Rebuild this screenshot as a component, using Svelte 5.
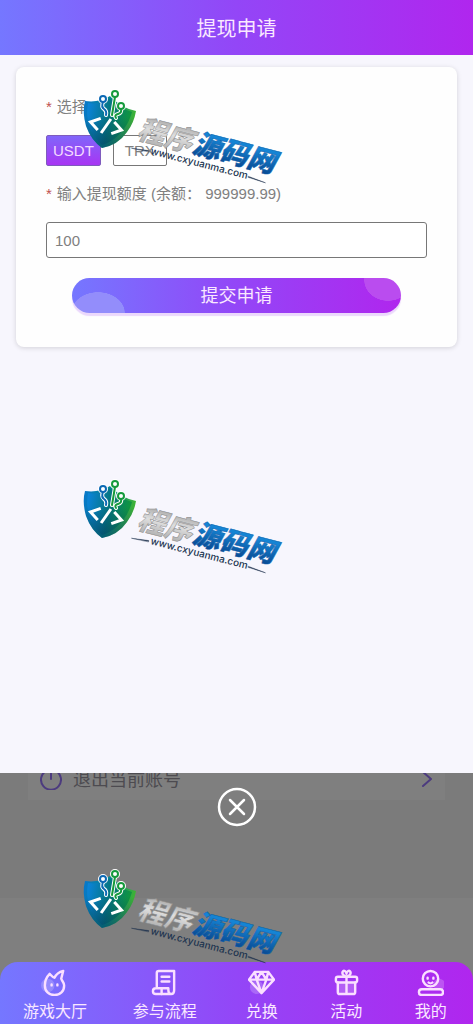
<script lang="ts">
const tokens = ["USDT", "TRX"];
const watermarks = ["top", "middle", "bottom"];
const tabs = [
  { icon: "hall", label: "游戏大厅" },
  { icon: "flow", label: "参与流程" },
  { icon: "swap", label: "兑换" },
  { icon: "gift", label: "活动" },
  { icon: "mine", label: "我的" },
];

let token = $state("USDT");
let amount = $state("100");
</script>

{#snippet tabIcon(name: string)}
  <svg class="tab-icon" viewBox="0 0 28 28" aria-hidden="true">
    {#if name === "hall"}
      <circle class="glow" cx="7" cy="17" r="7" />
      <path d="M9 5C5 9 4 13 4 17c0 6 4 10 10 10s10-4 10-10c0-3-2-4-3-7l2-8c-4 1-7 3-9 7-2 0-3-2-5-4z" />
      <path d="M11 16v1M17 16v1" />
    {:else if name === "flow"}
      <path d="M6 19V4c0-1 1-2 2-2h16v20c0 3-1 4-3 4s-3-2-3-4v-2H5c-2 0-3 1-3 3s1 3 3 3h16" />
      <path d="M11 8h8M11 13h8M11 20v6" />
    {:else if name === "swap"}
      <circle class="glow" cx="9" cy="19" r="7" />
      <path d="M7 3h14l6 8-13 14L1 11zM1 11h26M9 11l5 14 5-14M7 3l2 8 5-8 5 8 2-8" />
    {:else if name === "gift"}
      <rect class="glow" x="4" y="13" width="20" height="13" rx="3" />
      <rect x="3" y="8" width="22" height="6" rx="2" />
      <path d="M5 14v10c0 1 1 2 2 2h14c1 0 2-1 2-2V14M14 8v18M14 8c-3-1-5-3-4-5s4-1 4 2c0-3 3-4 4-2s-1 4-4 5" />
    {:else}
      <circle class="glow" cx="23" cy="16" r="6" />
      <circle cx="14" cy="10" r="8" />
      <path d="M11 9v1M17 9v1M12 14c1 1 3 1 4 0" />
      <rect x="2" y="21" width="25" height="6" rx="3" />
    {/if}
  </svg>
{/snippet}

{#snippet watermark(slot: string)}
  <svg class="watermark {slot}" viewBox="0 0 230 110" aria-hidden="true">
    <defs>
      <linearGradient id="edge-{slot}" x1="0" x2="1" y1="0.3" y2="0.5">
        <stop offset="0" stop-color="#0878c8" />
        <stop offset="0.5" stop-color="#078d86" />
        <stop offset="1" stop-color="#43b62c" />
      </linearGradient>
      <linearGradient id="core-{slot}" x1="0" x2="1" y1="0.3" y2="0.5">
        <stop offset="0" stop-color="#0b83d8" />
        <stop offset="0.5" stop-color="#05757c" />
        <stop offset="1" stop-color="#119a38" />
      </linearGradient>
      <linearGradient id="shade-{slot}" x1="0" x2="0" y1="0" y2="1">
        <stop offset="0.4" stop-color="#042b5c" stop-opacity="0" />
        <stop offset="1" stop-color="#042b5c" stop-opacity="0.5" />
      </linearGradient>
      <linearGradient id="silver-{slot}" x1="0" x2="0" y1="0" y2="1">
        <stop offset="0" stop-color="#8e8e8e" />
        <stop offset="0.5" stop-color="#dedede" />
        <stop offset="1" stop-color="#a2a2a2" />
      </linearGradient>
      <linearGradient id="blue-{slot}" x1="0" x2="0" y1="0" y2="1">
        <stop offset="0.3" stop-color="#1584d4" />
        <stop offset="1" stop-color="#073c83" />
      </linearGradient>
    </defs>
    <path d="M15 21Q29 23 40 16Q51 28 66 31Q64 43 57 52Q48 65 32 68Q21 60 16 46Q12 32 15 21z" fill="url(#edge-{slot})" />
    <path d="M18 23Q30 25 40 18Q49 28 62 32Q59 43 53 50Q45 61 32 65Q23 57 19 46Q16 34 18 23z" fill="url(#core-{slot})" />
    <path d="M15 21Q29 23 40 16Q51 28 66 31Q64 43 57 52Q48 65 32 68Q21 60 16 46Q12 32 15 21z" fill="url(#shade-{slot})" />
    <g class="circuit halo">
      <path d="M33 22q-2 5 1 7t2 6M45 17l-3 18M51 29q1 4-3 5t-2 4" />
      <circle cx="33" cy="19" r="3" /><circle cx="45" cy="14" r="3" /><circle cx="51" cy="26" r="3" />
    </g>
    <g class="circuit">
      <path class="blue" d="M33 22q-2 5 1 7t2 6" />
      <path class="green" d="M45 17l-3 18M51 29q1 4-3 5t-2 4" />
      <circle class="blue" cx="33" cy="19" r="3" />
      <circle class="green" cx="45" cy="14" r="3" />
      <circle class="green" cx="51" cy="26" r="3" />
    </g>
    <path class="code" transform="translate(36 46) rotate(14.500)" d="M-7-6l-9 6 9 6M3-8l-6 16M7-6l9 6-9 6" />
    <g transform="translate(66 58) rotate(14.500)">
      <text class="brand" fill="url(#silver-{slot})" stroke="#8b8b8b">程序</text>
      <text class="brand" x="57" fill="url(#blue-{slot})" stroke="#0d62ad">源码网</text>
    </g>
    <g transform="translate(80 74) rotate(14.500)">
      <text class="site">www.cxyuanma.com</text>
      <path class="rule" d="M-19-1l17-2 0 1zM101-3l18 2-18-1z" />
    </g>
  </svg>
{/snippet}

<div class="page">
  <header>
    <h1>提现申请</h1>
  </header>

  <main>
    <form class="card" onsubmit={(e) => e.preventDefault()}>
      <div class="label" id="token-label"><span class="required">*</span>选择</div>
      <div class="tokens" role="group" aria-labelledby="token-label">
        {#each tokens as name (name)}
          <button
            type="button"
            class="token"
            class:active={token === name}
            onclick={() => (token = name)}
          >
            {name}
          </button>
        {/each}
      </div>
      <label class="label" for="amount">
        <span class="required">*</span>输入提现额度 (余额： 999999.99)
      </label>
      <input id="amount" type="text" inputmode="decimal" bind:value={amount} />
      <button class="submit" type="submit">提交申请</button>
    </form>
  </main>

  <section class="backdrop">
    <a class="logout" href="#logout">
      <svg class="power" viewBox="0 0 22 22" aria-hidden="true">
        <path d="M6 3a10 10 0 1 0 10 0M11 1v10" />
      </svg>
      <span>退出当前账号</span>
      <svg class="chevron" viewBox="0 0 12 22" aria-hidden="true">
        <path d="M2 4l8 7-8 7" />
      </svg>
    </a>
    <button class="close" type="button" aria-label="关闭">
      <svg viewBox="0 0 40 40" aria-hidden="true">
        <circle cx="20" cy="20" r="18" />
        <path d="M13 13l14 14M27 13L13 27" />
      </svg>
    </button>
  </section>

  <div class="tab-wrap">
    <nav>
      {#each tabs as tab (tab.icon)}
        <a class="tab" href="#{tab.icon}">
          {@render tabIcon(tab.icon)}
          <span>{tab.label}</span>
        </a>
      {/each}
    </nav>
  </div>

  {#each watermarks as slot (slot)}
    {@render watermark(slot)}
  {/each}
</div>

<style>
:global(body) {
  margin: 0;
}

.page {
  --brand: linear-gradient(90deg, #7577ff, #9346f7 50%, #b026ee);
  position: relative;
  display: flex;
  flex-direction: column;
  min-height: 100vh;
  background: #f7f6fd;
  color: #808080;
  font-family: "Liberation Sans", "Noto Sans CJK SC", sans-serif;
  font-size: 15px;
}

button,
input {
  box-sizing: border-box;
  font: inherit;
}

a {
  text-decoration: none;
}

svg {
  display: block;
  fill: none;
  stroke-linecap: round;
  stroke-linejoin: round;
}

header {
  display: flex;
  align-items: center;
  justify-content: center;
  height: 55px;
  background: var(--brand);
}

h1 {
  margin: 0;
  color: #fae8ff;
  font-size: 20px;
  font-weight: 400;
}

main {
  flex: 1;
  padding: 12px 16px;
}

.card {
  display: flex;
  flex-direction: column;
  gap: 16px;
  padding: 28px 30px 34px;
  border-radius: 8px;
  background: #fefefe;
  box-shadow: 0 1px 5px rgba(0, 0, 0, 0.15);
}

.label {
  line-height: 24px;
}

.required {
  margin-right: 5px;
  color: #c0504d;
}

.tokens {
  display: flex;
  gap: 12px;
}

.token {
  min-width: 54px;
  height: 31px;
  padding: 0 6px;
  border: 1px solid #777;
  border-radius: 2px;
  background: #fff;
  color: #808080;
}

.token.active {
  border-color: #7e5bbd;
  background: linear-gradient(#8066fa, #a835f3);
  color: #f5dcff;
}

input {
  width: 100%;
  height: 36px;
  padding: 0 8px;
  border: 1px solid #777;
  border-radius: 3px;
  background: #fff;
  color: #808080;
}

.submit {
  height: 35px;
  margin: 4px 26px 0;
  padding: 0 0 3px;
  border: 0;
  border-radius: 18px;
  background:
    radial-gradient(ellipse 27px 21px at 26px 35px, #938dfb 98%, transparent),
    radial-gradient(ellipse 24px 21px at calc(100% - 13px) 2px, #ba4cef 98%, transparent),
    var(--brand);
  box-shadow: 0 3px 1px #ebd8fc;
  color: #fae8ff;
  font-size: 18px;
}

.backdrop {
  position: relative;
  height: 189px;
  background: linear-gradient(#7b7b7b 125px, #7f7f7f 125px);
}

.logout {
  display: flex;
  align-items: flex-end;
  height: 27px;
  margin: 0 28px;
  padding: 0 12px;
  overflow: hidden;
  background: #7f7f7f;
  color: #4d4b50;
  font-size: 18px;
  line-height: 40px;
}

.logout span {
  flex: 1;
  margin-left: 11px;
}

.power {
  width: 22px;
  height: 22px;
  margin-bottom: 10px;
  stroke: #4c3b7f;
  stroke-width: 2;
}

.chevron {
  width: 12px;
  height: 22px;
  margin-bottom: 10px;
  stroke: #4c3b7f;
  stroke-width: 2;
}

.close {
  position: absolute;
  top: 14px;
  left: 50%;
  padding: 0;
  border: 0;
  background: none;
  transform: translateX(-50%);
}

.close svg {
  width: 40px;
  height: 40px;
  stroke: #fff;
  stroke-width: 2.500;
}

.tab-wrap {
  background: #7f7f7f;
}

nav {
  display: grid;
  grid-template-columns: 13fr 13fr 10fr 10fr 10fr;
  height: 62px;
  border-radius: 18px 18px 0 0;
  background: var(--brand);
}

.tab {
  display: flex;
  flex-direction: column;
  align-items: center;
  gap: 5px;
  padding-top: 7px;
  color: #fae8ff;
  font-size: 16px;
  line-height: 22px;
}

.tab-icon {
  width: 27px;
  height: 27px;
  stroke: #fadfff;
  stroke-width: 2.500;
}

.glow {
  fill: #fff;
  fill-opacity: 0.2;
  stroke: none;
}

.watermark {
  position: absolute;
  left: 70px;
  width: 230px;
  height: 110px;
  pointer-events: none;
}

.watermark.top {
  top: 80px;
}

.watermark.middle {
  top: 470px;
}

.watermark.bottom {
  top: 860px;
}

.circuit {
  fill: #fff;
  stroke-width: 2;
}

.circuit path {
  fill: none;
}

.circuit.halo {
  stroke: #fff;
  stroke-width: 4;
}

.circuit .blue {
  stroke: #0b68b4;
}

.circuit .green {
  stroke: #159a3c;
}

.code {
  stroke: #fff;
  stroke-linecap: butt;
  stroke-linejoin: miter;
  stroke-width: 3;
}

.brand {
  font-family: "Noto Sans CJK SC", sans-serif;
  font-size: 28px;
  font-style: italic;
  font-weight: 900;
  stroke-width: 0.500;
}

.site {
  fill: #20344f;
  font-family: Inter, sans-serif;
  font-size: 10px;
  font-weight: 500;
}

.rule {
  fill: #20344f;
  stroke: #20344f;
  stroke-width: 0.400;
}
</style>
